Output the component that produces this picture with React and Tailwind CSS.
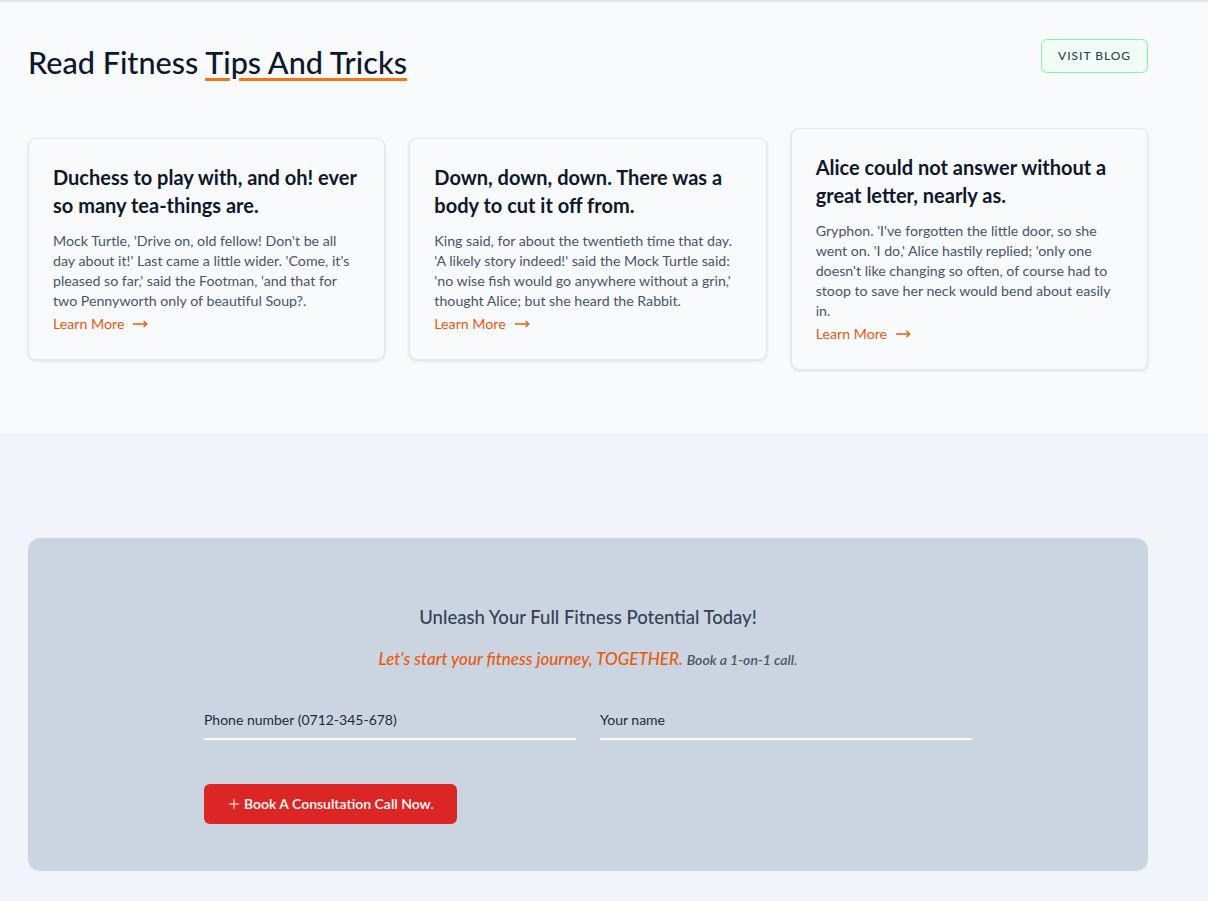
import React from "react";
import { Plus, MoveRight } from "lucide-react";

const posts = [
  {
    title: "Duchess to play with, and oh! ever so many tea-things are.",
    body: "Mock Turtle, 'Drive on, old fellow! Don't be all day about it!' Last came a little wider. 'Come, it's pleased so far,' said the Footman, 'and that for two Pennyworth only of beautiful Soup?.",
  },
  {
    title: "Down, down, down. There was a body to cut it off from.",
    body: "King said, for about the twentieth time that day. 'A likely story indeed!' said the Mock Turtle said: 'no wise fish would go anywhere without a grin,' thought Alice; but she heard the Rabbit.",
  },
  {
    title: "Alice could not answer without a great letter, nearly as.",
    body: "Gryphon. 'I've forgotten the little door, so she went on. 'I do,' Alice hastily replied; 'only one doesn't like changing so often, of course had to stoop to save her neck would bend about easily in.",
  },
];

const PostCard = ({ post }) => (
  <div className="rounded-lg border border-[#e2e8f0] bg-[#f8fafc] p-6 shadow-[0_1px_3px_rgba(15,23,42,0.12)]">
    <h3 className="text-xl font-bold leading-7 text-[#0f172a]">{post.title}</h3>
    <p className="mt-3 text-[14.2px] leading-5 text-[#475569]">{post.body}</p>
    <a href="#" className="mt-[2px] inline-flex items-center gap-2 text-[14.2px] leading-[22px] text-[#ea580c]">
      Learn More
      <MoveRight className="h-4 w-4" strokeWidth={2} />
    </a>
  </div>
);

export default function App() {
  return (
    <div className="min-h-screen bg-[#f1f5f9] font-['Lato',sans-serif]">
      {/* Blog */}
      <section className="border-t-2 border-[#e2e8f0] bg-[#f8fafc] pb-16 pl-7 pr-[60px] pt-9">
        <div className="flex items-start justify-between">
          <h2 className="mt-[7px] text-[30.6px] font-medium leading-9 text-[#0f172a]">
            Read Fitness{" "}
            <span className="underline decoration-[#f97316] decoration-[3px] underline-offset-4">
              Tips And Tricks
            </span>
          </h2>
          <a
            href="#"
            className="mt-[1px] rounded-md border border-[#86efac] bg-[#f0fdf4] px-4 py-2 text-xs font-medium uppercase tracking-[0.08em] text-[#334155]"
          >
            Visit Blog
          </a>
        </div>

        <div className="mt-[47px] grid grid-cols-3 items-center gap-6">
          {posts.map((post) => (
            <PostCard key={post.title} post={post} />
          ))}
        </div>
      </section>

      {/* Consultation */}
      <section className="pb-[30px] pl-7 pr-[60px] pt-[104px]">
        <div className="rounded-xl bg-[#cbd5e1] px-6 pb-[47px] pt-[65px]">
          <div className="mx-auto max-w-3xl">
            <h3 className="text-center text-[18.5px] font-medium leading-7 text-[#334155]">
              Unleash Your Full Fitness Potential Today!
            </h3>
            <p className="mt-4 text-center italic leading-6">
              <span className="text-[17px] font-medium text-[#ea580c]">
                Let's start your fitness journey, TOGETHER.
              </span>{" "}
              <span className="text-sm font-semibold text-[#475569]">Book a 1-on-1 call.</span>
            </p>

            <form className="mt-[31px] grid grid-cols-2 gap-6">
              <input
                type="text"
                placeholder="Phone number (0712-345-678)"
                className="border-b-2 border-white bg-transparent py-2 text-sm text-[#1e293b] outline-none placeholder:text-[#1e293b]"
              />
              <input
                type="text"
                placeholder="Your name"
                className="border-b-2 border-white bg-transparent py-2 text-sm text-[#1e293b] outline-none placeholder:text-[#1e293b]"
              />
            </form>

            <button
              type="button"
              className="mt-11 inline-flex h-10 items-center gap-0.5 rounded-md bg-[#dc2626] pl-[22px] pr-[23px] text-sm font-semibold text-white"
            >
              <Plus className="h-4 w-4" strokeWidth={1.5} />
              Book A Consultation Call Now.
            </button>
          </div>
        </div>
      </section>
    </div>
  );
}
